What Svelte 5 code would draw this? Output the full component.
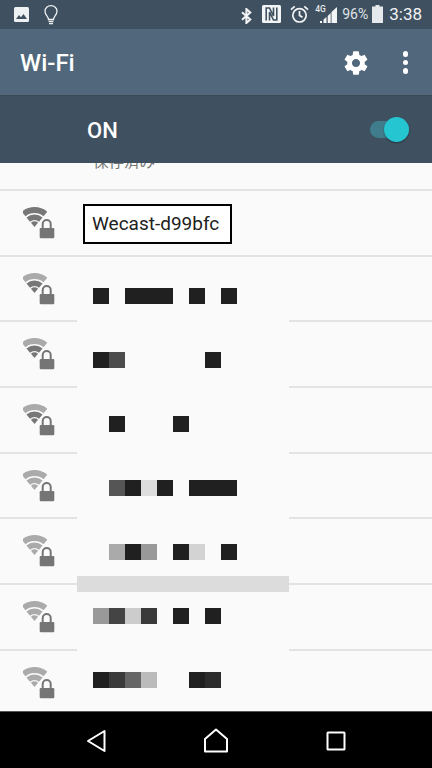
<script>
  const d = '#202020';
  const rows = [{ level: 3 }, { level: 2 }, { level: 2 }, { level: 2 }, { level: 0 }, { level: 0 }, { level: 0 }, { level: 0 }];
  // Redaction tiles: columns of 16px, starting 16px after the patch's left edge
  const tiles = [
    [d, null, d, d, d, null, d, null, d],
    [d, '#4c4c4c', null, null, null, null, null, d],
    [null, d, null, null, null, d],
    [null, '#555', d, '#ddd', d, null, d, d, d],
    [null, '#aaa', d, '#999', null, d, '#d3d3d3', null, d],
    ['#999', '#444', '#ccc', '#3a3a3a', null, d, null, d],
    [d, '#3a3a3a', '#666', '#bbb', null, null, d, '#2c2c2c']
  ];
</script>

<div class="phone">
  <header class="status">
    <div class="status-left">
      <svg class="ic-image" viewBox="0 0 15 15"><rect width="15" height="15" rx="1.5" fill="#eef1f3"/><path d="M2 12 L5 8 L7 10.2 L9.5 7 L13 12 Z" fill="#3f5060"/></svg>
      <svg class="ic-bulb" viewBox="0 0 14 20" fill="none" stroke="#eef1f3" stroke-width="1.3"><path d="M4.5 14.5 C4.5 11.5 1 10 1 6.3 A6 5.6 0 0 1 13 6.3 C13 10 9.5 11.5 9.5 14.5 Z"/><path d="M4.6 16.5 H9.4 M5 18.7 H9"/></svg>
    </div>
    <div class="status-right">
      <svg class="ic-bt" viewBox="0 0 11 16" fill="none" stroke="#f2f4f5" stroke-width="2"><path d="M1 4.3 L9.3 11.5 L5.4 15 V1 L9.3 4.5 L1 11.7"/></svg>
      <svg class="ic-nfc" viewBox="0 0 19 18"><rect width="19" height="18" rx="1.5" fill="#f2f4f5"/><path d="M4.2 15.5 V3 H7.5 L11.5 11 V2.5 M14.8 2.5 V15 H11.5 L7.5 7 V15.5" fill="none" stroke="#3f5060" stroke-width="1.6"/></svg>
      <svg class="ic-alarm" viewBox="0 0 19 18" fill="none" stroke="#f2f4f5" stroke-width="1.7"><circle cx="9.5" cy="10.3" r="6.7"/><path d="M9.5 6 V10.5 L12.5 12.3 M1 4.7 L4.7 1.3 M18 4.7 L14.3 1.3"/></svg>
      <span class="net">4G</span>
      <svg class="ic-signal" viewBox="0 0 17 16" fill="#f2f4f5"><path d="M0 16 H2 V14 H0 Z M3.5 16 H6.5 V10 L3.5 12.5 Z M7.7 16 H10.7 V6 L7.7 9 Z M11.5 16 H17 V0 L11.5 5 Z"/></svg>
      <span class="pct">96%</span>
      <svg class="ic-batt" viewBox="0 0 11 18"><path d="M3.5 0 H7.5 V1.5 H11 V18 H0 V1.5 H3.5 Z" fill="#e6e9eb"/></svg>
      <span class="clock">3:38</span>
    </div>
  </header>

  <div class="appbar">
    <h1>Wi-Fi</h1>
    <div class="actions">
      <svg class="ic-gear" viewBox="0 0 24 24"><path fill="#fff" d="M19.43 12.98c.04-.32.07-.64.07-.98s-.03-.66-.07-.98l2.11-1.65c.19-.15.24-.42.12-.64l-2-3.46c-.12-.22-.39-.3-.61-.22l-2.49 1c-.52-.4-1.08-.73-1.69-.98l-.38-2.65C14.46 2.18 14.25 2 14 2h-4c-.25 0-.46.18-.49.42l-.38 2.65c-.61.25-1.17.59-1.69.98l-2.49-1c-.23-.09-.49 0-.61.22l-2 3.46c-.13.22-.07.49.12.64l2.11 1.65c-.04.32-.07.65-.07.98s.03.66.07.98l-2.11 1.65c-.19.15-.24.42-.12.64l2 3.46c.12.22.39.3.61.22l2.49-1c.52.4 1.08.73 1.69.98l.38 2.65c.03.24.24.42.49.42h4c.25 0 .46-.18.49-.42l.38-2.65c.61-.25 1.17-.59 1.69-.98l2.49 1c.23.09.49 0 .61-.22l2-3.46c.12-.22.07-.49-.12-.64l-2.11-1.65zM12 15.5c-1.93 0-3.5-1.57-3.5-3.5s1.57-3.5 3.5-3.5 3.5 1.57 3.5 3.5-1.57 3.5-3.5 3.5z"/></svg>
      <div class="dots"><i></i><i></i><i></i></div>
    </div>
  </div>

  <div class="master">
    <span class="on">ON</span>
    <div class="switch"><div class="thumb"></div></div>
  </div>

  <main class="list">
    <div class="saved-row"><span class="saved">保存済み</span></div>
    {#each rows as row, i}
      <div class="row">
        <svg class="net-icon" viewBox="0 0 32 32" fill="none">
          <path d="M.6 7A17 17 0 0 1 22.4 7" stroke-width="6" stroke={row.level >= 3 ? '#777' : '#aaa'}/>
          <path d="M5.23 12.53A9.75 9.75 0 0 1 17.77 12.53" stroke-width="5.5" stroke={row.level >= 2 ? '#777' : '#aaa'}/>
          <path d="M11.5 20L7.96 15.79A5.5 5.5 0 0 1 15.04 15.79Z" fill={row.level >= 1 ? '#777' : '#aaa'}/>
          <path d="M19.7 22V17a4 4 0 0 1 8 0V22" stroke="#fafafa" stroke-width="5"/>
          <rect x="14.7" y="19" width="18" height="14" fill="#fafafa"/>
          <path d="M19.7 22V17a4 4 0 0 1 8 0V22" stroke="#757575" stroke-width="2"/>
          <rect x="16.7" y="21" width="14.6" height="10.3" rx="1.2" fill="#757575"/>
        </svg>
        {#if i === 0}
          <span class="ssid">Wecast-d99bfc</span>
        {/if}
      </div>
    {/each}

    <div class="patch">
      {#each tiles as line, i}
        {#if i === 5}<div class="bar"></div>{/if}
        <div class="tiles">
          {#each line as colour}
            <i style:background={colour}></i>
          {/each}
        </div>
      {/each}
    </div>
  </main>

  <nav class="nav">
    <svg class="ic-back" viewBox="0 0 20 24" fill="none" stroke="#fff" stroke-width="2" stroke-linejoin="round"><path d="M18.5 2 V22 L2 12 Z"/></svg>
    <svg class="ic-home" viewBox="0 0 26 25" fill="none" stroke="#fff" stroke-width="2" stroke-linejoin="round"><path d="M13 1.5 L24 11 V23.5 H2 V11 Z"/></svg>
    <svg class="ic-recent" viewBox="0 0 20 20" fill="none" stroke="#fff" stroke-width="2"><rect x="1.5" y="1.5" width="17" height="17" rx=".5"/></svg>
  </nav>
</div>

<style>
  :global(body) { margin: 0; }
  .phone {
    width: 432px;
    height: 768px;
    display: flex;
    flex-direction: column;
    overflow: hidden;
    font-family: Roboto, "Noto Sans CJK JP", sans-serif;
    background: #fafafa;
  }
  svg { display: block; flex: none; }

  .status {
    height: 29px;
    flex: none;
    background: #3f5060;
    display: flex;
    justify-content: space-between;
    align-items: flex-start;
  }
  .status-left { display: flex; align-items: flex-start; padding: 5px 0 0 14px; }
  .ic-image { width: 15px; height: 15px; margin-top: 2px; }
  .ic-bulb { width: 14px; height: 20px; margin-left: 15px; }
  .status-right { display: flex; align-items: flex-start; padding: 5px 10px 0 0; }
  .ic-bt { width: 11px; height: 16px; margin-top: 3px; }
  .ic-nfc { width: 19px; height: 18px; margin-left: 10px; }
  .ic-alarm { width: 19px; height: 18px; margin-left: 9px; }
  .net {
    width: 11px;
    margin: -1px 0 0 6px;
    font-size: 8.5px;
    line-height: 10px;
    font-weight: 500;
    color: #e6e9eb;
  }
  .ic-signal { width: 17px; height: 16px; margin: 2px 0 0 -6px; }
  .pct { margin-left: 5px; font-size: 14px; line-height: 19px; color: #dfe3e6; }
  .ic-batt { width: 11px; height: 18px; margin-left: 4px; }
  .clock { margin-left: 6px; font-size: 17px; line-height: 19px; color: #f2f4f5; }

  .appbar {
    height: 67px;
    flex: none;
    box-sizing: border-box;
    background: #51677b;
    border-bottom: 1px solid #394955;
    display: flex;
    align-items: center;
    justify-content: space-between;
    padding: 1px 24px 0 20px;
  }
  h1 { margin: 0; font-size: 24px; font-weight: 500; color: #fff; }
  .actions { display: flex; align-items: center; gap: 33px; }
  .ic-gear { width: 28px; height: 28px; }
  .dots { display: flex; flex-direction: column; gap: 3px; }
  .dots i { display: block; width: 5.4px; height: 5.4px; border-radius: 50%; background: #fff; }

  .master {
    height: 67px;
    flex: none;
    background: #3f5060;
    display: flex;
    align-items: center;
    justify-content: space-between;
    padding: 0 23px 0 87px;
  }
  .on { font-size: 22px; font-weight: 500; color: #fff; padding-top: 2px; }
  .switch { position: relative; width: 39px; height: 17px; border-radius: 9px; background: #3f7d8c; }
  .thumb {
    position: absolute;
    right: 0;
    top: -4px;
    width: 25px;
    height: 25px;
    border-radius: 50%;
    background: #26c5d2;
    box-shadow: 0 1px 2px rgba(0, 0, 0, .35);
  }

  .list { position: relative; flex: 1; min-height: 0; overflow: hidden; }
  .saved-row {
    height: 28px;
    box-sizing: border-box;
    border-bottom: 2px solid #e3e3e3;
    overflow: hidden;
    position: relative;
  }
  .saved { position: absolute; left: 93px; bottom: 18px; font-size: 15.5px; line-height: 18px; color: #757575; white-space: nowrap; }
  .row {
    height: 65.7px;
    box-sizing: border-box;
    border-bottom: 2px solid #e3e3e3;
    position: relative;
    padding: 16px 0 0 23px;
  }
  .net-icon { width: 32px; height: 32px; }
  .ssid {
    position: absolute;
    left: 83px;
    top: 13px;
    height: 40px;
    box-sizing: border-box;
    border: 2px solid #000;
    background: #fff;
    padding: 0 11px 0 7px;
    font-size: 19px;
    line-height: 36px;
    color: #212121;
    white-space: nowrap;
  }

  .patch {
    position: absolute;
    left: 77px;
    width: 212px;
    top: 108.5px;
    bottom: 0;
    background: #fafafa;
    display: flex;
    flex-direction: column;
    gap: 48px;
    padding: 16px 0 0 16px;
    box-sizing: border-box;
  }
  .tiles { height: 16px; display: flex; flex: none; }
  .tiles i { display: block; width: 16px; height: 16px; }
  .bar { position: absolute; left: 0; right: 0; top: 304px; height: 16px; background: #dcdcdc; }

  .nav {
    height: 57px;
    flex: none;
    box-sizing: border-box;
    background: #000;
    border-top: 1px solid #555;
    display: flex;
    align-items: center;
    padding: 1px 0 0 86px;
  }
  .ic-back { width: 20px; height: 24px; }
  .ic-home { width: 26px; height: 25px; margin-left: 97px; }
  .ic-recent { width: 20px; height: 20px; margin-left: 97px; }
</style>
